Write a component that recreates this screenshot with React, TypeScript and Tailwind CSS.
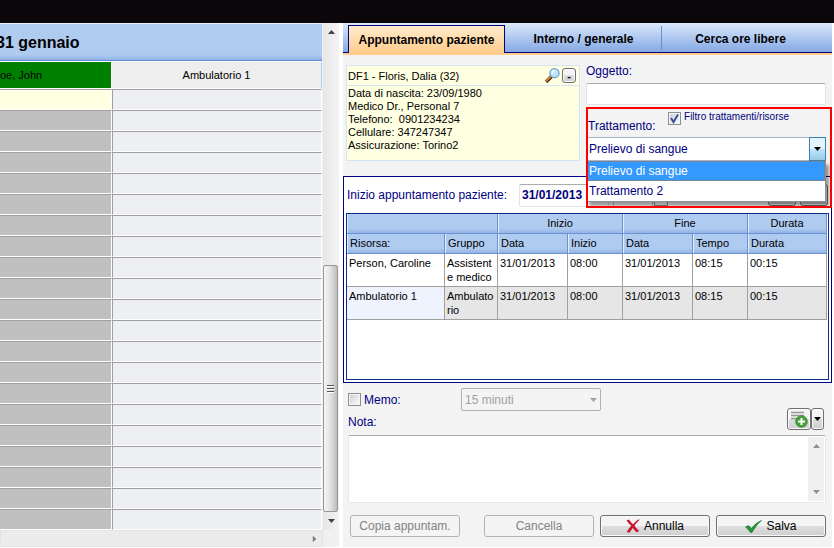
import { useState } from 'react';
import type { ReactNode } from 'react';
import clsx from 'clsx';

const slots = Array.from({ length: 21 }, (_, i) => i);

const tabs = ['Appuntamento paziente', 'Interno / generale', 'Cerca ore libere'];

const treatments = ['Prelievo di sangue', 'Trattamento 2'];

const resources = [
  { name: 'Person, Caroline', group: 'Assistente medico', date: '31/01/2013', from: '08:00', to: '08:15', duration: '00:15' },
  { name: 'Ambulatorio 1', group: 'Ambulatorio', date: '31/01/2013', from: '08:00', to: '08:15', duration: '00:15' },
];

const Arrow = ({ dir = 'down', className }: { dir?: 'up' | 'down' | 'right'; className?: string }) => (
  <svg viewBox="0 0 7 4" className={clsx('w-[7px] h-1 shrink-0', dir === 'up' && 'rotate-180', dir === 'right' && '-rotate-90', className)}>
    <path d="M0 0h7L3.500 4z" fill="currentColor" />
  </svg>
);

const Magnifier = () => (
  <svg viewBox="0 0 15 15" className="w-[15px] h-[15px]">
    <path d="M6.500 8.500 1 13.800" stroke="#3a2a20" strokeWidth="3.600" />
    <path d="M6 8.300 1 13" stroke="#e8892c" strokeWidth="1.800" />
    <circle cx="9.500" cy="5.200" r="4.500" fill="#bfe6fb" stroke="#6f9fd0" strokeWidth="1.300" />
    <path d="M7 5.500a3 3 0 0 1 3-3" stroke="#fff" strokeWidth="1.500" fill="none" />
  </svg>
);

const AddNote = () => (
  <svg viewBox="0 0 18 17" className="w-[18px] h-[17px]">
    <path d="M1 1.500h13M1 4.500h13M1 7.500h7" stroke="#999" strokeWidth="1.600" />
    <circle cx="11.500" cy="10.500" r="5.800" fill="#44a13c" stroke="#2e8530" strokeWidth="0.800" />
    <path d="M11.500 7v7M8 10.500h7" stroke="#fff" strokeWidth="2" />
  </svg>
);

const Cross = () => (
  <svg viewBox="0 0 14 14" className="w-[14px] h-[14px]">
    <path d="M.5 1.500 3 .5c1 1.500 2.500 3.500 4 4.800C8.500 3.500 10.500 1.500 13 .3l.5.700C11.500 2.500 9.500 4.800 8.500 6.700c1.300 1.900 2.800 3.500 4.500 5L11 13.500C9.500 12.500 8 10.500 6.800 9 5.500 10.500 4.300 12.300 3.500 13.800L.8 13C2 10.800 3.500 8.500 5.200 6.800 3.500 5.200 1.800 3.300.5 1.500z" fill="#c8142c" />
  </svg>
);

const Check = () => (
  <svg viewBox="0 0 17 13" className="w-[17px] h-[13px]">
    <path d="M.5 7 3.500 5.500 6.500 8.500C9 5 12.500 2 16.500.5 12.500 4 9.500 8 7 12.500H5.500C4 10.500 2.500 8.500.5 7z" fill="#1f9a35" stroke="#137225" strokeWidth="0.600" />
  </svg>
);

const Tick = ({ id, checked, onChange, className }: { id: string; checked: boolean; onChange: (v: boolean) => void; className?: string }) => (
  <span className={clsx('relative block w-[13px] h-[13px] shrink-0', className)}>
    <input
      id={id}
      type="checkbox"
      checked={checked}
      onChange={(e) => onChange(e.target.checked)}
      className="block w-[13px] h-[13px] appearance-none border border-[#8e8f8f] bg-linear-to-br from-[#c8ccd2] to-white shadow-[inset_0_0_0_1px_#f4f4f4]"
    />
    {checked && (
      <svg viewBox="0 0 13 13" className="absolute inset-0 pointer-events-none">
        <path d="M3 6l2.500 4L10 2.500" fill="none" stroke="#3d4f94" strokeWidth="2" />
      </svg>
    )}
  </span>
);

const btn = 'border border-[#707070] rounded-[3px] bg-linear-to-b from-[#f4f4f4] from-50% via-[#dedede] via-50% to-[#cfcfcf] text-black shadow-[inset_0_0_0_1px_#fafafa]';

const ActionButton = ({ icon, children, disabled }: { icon?: ReactNode; children: ReactNode; disabled?: boolean }) => (
  <button
    type="button"
    disabled={disabled}
    className={clsx(
      'w-[110px] h-[22px] flex items-center justify-center gap-1',
      disabled ? 'border border-[#adb2b5] rounded-[3px] bg-[#f4f4f4] text-[#838383]' : btn,
    )}
  >
    {icon}
    {children}
  </button>
);

const Agenda = () => (
  <section className="flex flex-col min-w-0 bg-[#f0f0f0] border-r-4 border-white">
    <div className="flex">
      <div className="flex-1 min-w-0 overflow-hidden bg-white">
        <h1 className="h-[38px] border-t border-b border-t-[#e8f0fc] border-b-[#5f8bd3] bg-linear-to-b from-[#b0cbf0] from-85% to-[#8fb2e6] text-base leading-[37px] font-bold">
          <span className="-ml-1">31 gennaio</span>
        </h1>
        <table className="w-full table-fixed border-separate border-spacing-0 text-[11px]">
          <colgroup>
            <col className="w-[112px]" />
            <col />
          </colgroup>
          <thead>
            <tr className="h-[28px]">
              <th className="p-0 border-t border-b border-r border-white bg-[#008000] text-left font-normal">oe, John</th>
              <th className="p-0 border-t border-b border-white border-r-[#b0cbf0] border-r bg-[#eee] text-center font-normal">Ambulatorio 1</th>
            </tr>
          </thead>
          <tbody>
            {slots.map((i) => (
              <tr key={i} className="h-[21px]">
                <td className={clsx('p-0 border-t border-t-[#a0a0a0] border-b border-r border-b-white border-r-white', i === 0 ? 'bg-[#ffffe1]' : 'bg-[#c0c0c0]')} />
                <td className="p-0 border-t border-l border-t-[#a0a0a0] border-l-[#a0a0a0] border-b border-r border-b-white border-r-white bg-[#eeeff2]" />
              </tr>
            ))}
          </tbody>
        </table>
      </div>
      <div className="ml-px w-4 flex flex-col items-stretch bg-linear-to-r from-[#e6e6e6] to-[#f4f4f4] text-[#404040]">
        <button type="button" aria-label="Su" className="h-[18px] flex items-center justify-center">
          <Arrow dir="up" />
        </button>
        <div className="flex-1 flex flex-col">
          <div className="flex-[225]" />
          <div className="flex-[246] mr-px border border-[#979797] rounded-[2px] bg-linear-to-r from-[#f5f5f5] via-[#e4e4e4] via-45% to-[#bdbdc0] flex flex-col items-center justify-center gap-px">
            <span className="w-[7px] h-[2px] border-b border-white bg-[#555]" />
            <span className="w-[7px] h-[2px] border-b border-white bg-[#555]" />
            <span className="w-[7px] h-[2px] border-b border-white bg-[#555]" />
          </div>
        </div>
        <button type="button" aria-label="Giù" className="h-[18px] flex items-center justify-center">
          <Arrow />
        </button>
      </div>
    </div>
    <div className="h-[17px] mr-4 flex items-center justify-end bg-[#ececec] border border-[#e3e3e3] pr-1 text-[#808080]">
      <Arrow dir="right" />
    </div>
  </section>
);

const PatientCard = () => (
  <div className="flex-[233] h-24 border border-[#d5e3f3] bg-[#ffffe1] text-[11px] text-black">
    <div className="h-5 px-px flex items-center border-b border-[#d5e3f3]">
      <span className="flex-1 leading-4">DF1 - Floris, Dalia (32)</span>
      <Magnifier />
      <button type="button" className={clsx('mx-[2px] w-[14px] h-[15px] font-bold leading-[12px]', btn)}>-</button>
    </div>
    <div className="px-px pt-px leading-[13px] whitespace-pre">
      <p>Data di nascita: 23/09/1980</p>
      <p>Medico Dr., Personal 7</p>
      <p>Telefono:{'  '}0901234234</p>
      <p>Cellulare: 347247347</p>
      <p>Assicurazione: Torino2</p>
    </div>
  </div>
);

const TreatmentPicker = () => {
  const [treatment, setTreatment] = useState(treatments[0]);
  const [filter, setFilter] = useState(true);

  return (
    <div className="relative z-10 pr-[6px]">
      <div className="h-[30px] px-[2px] pt-[5px] flex items-start">
        <label htmlFor="treatment" className="w-20 pt-[6px] leading-4">Trattamento:</label>
        <Tick id="filter" checked={filter} onChange={setFilter} />
        <label htmlFor="filter" className="ml-[3px] text-[10px] leading-[10px] whitespace-nowrap">Filtro trattamenti/risorse</label>
      </div>
      <div className="relative">
        <select
          id="treatment"
          value={treatment}
          onChange={(e) => setTreatment(e.target.value)}
          className="block w-full h-6 appearance-none border border-[#a8b4c4] bg-white px-[2px]"
        >
          {treatments.map((t) => (
            <option key={t}>{t}</option>
          ))}
        </select>
        <span className="absolute right-0 top-0 w-[17px] h-6 flex items-center justify-center border border-[#3c7fb1] bg-linear-to-b from-[#e3f4fc] from-50% via-[#bee6fd] via-50% to-[#98cbe6] text-black pointer-events-none">
          <Arrow />
        </span>
        <ul role="listbox" className="absolute inset-x-0 top-full border border-[#8a9099] border-t-0 bg-white shadow-[3px_4px_3px_rgba(0,0,0,0.4)] leading-5">
          {treatments.map((t) => (
            <li
              key={t}
              role="option"
              aria-selected={t === treatment}
              onClick={() => setTreatment(t)}
              className={clsx('h-5 px-[2px]', t === treatment && 'bg-[#3399ff] text-white outline-1 outline-dotted outline-[#b87030] -outline-offset-1')}
            >
              {t}
            </li>
          ))}
        </ul>
      </div>
      <div className="absolute inset-x-0 top-0 h-[101px] border-2 border-[#ff0000] pointer-events-none" />
    </div>
  );
};

const head = 'h-5 p-0 px-[3px] border-b border-r border-[#6a92d2] shadow-[inset_1px_0_0_#e4eefb] bg-linear-to-b from-[#b0cbf0] from-75% to-[#92b4e6] font-normal';
const cell = 'h-[33px] px-[2px] pt-[2px] pb-[2px] border-b border-r border-[#a0a0a0] align-top leading-[14px] break-all';

const ResourceTable = () => (
  <div className="m-[2px] mt-0 h-[167px] pr-px border border-[#0a2f8f] bg-white text-[11px] text-black">
    <table className="w-full table-fixed border-separate border-spacing-0">
      <colgroup>
        <col className="w-[98px]" />
        <col className="w-[53px]" />
        <col className="w-[70px]" />
        <col className="w-[55px]" />
        <col className="w-[70px]" />
        <col className="w-[55px]" />
        <col />
      </colgroup>
      <thead>
        <tr>
          <th colSpan={2} className={head} />
          <th colSpan={2} className={head}>Inizio</th>
          <th colSpan={2} className={head}>Fine</th>
          <th className={head}>Durata</th>
        </tr>
        <tr>
          {['Risorsa:', 'Gruppo', 'Data', 'Inizio', 'Data', 'Tempo', 'Durata'].map((h, i) => (
            <th key={i} className={clsx(head, 'text-left')}>{h}</th>
          ))}
        </tr>
      </thead>
      <tbody>
        {resources.map((r, i) => {
          const shade = i % 2 ? 'bg-[#e6e6e6]' : 'bg-white';
          return (
            <tr key={r.name}>
              <td className={clsx(cell, i % 2 ? 'bg-[#eef3fd]' : 'bg-white')}>{r.name}</td>
              <td className={clsx(cell, shade)}>{r.group}</td>
              <td className={clsx(cell, shade)}>{r.date}</td>
              <td className={clsx(cell, shade)}>{r.from}</td>
              <td className={clsx(cell, shade)}>{r.date}</td>
              <td className={clsx(cell, shade)}>{r.to}</td>
              <td className={clsx(cell, shade)}>{r.duration}</td>
            </tr>
          );
        })}
      </tbody>
    </table>
  </div>
);

const AppointmentPanel = () => {
  const [active, setActive] = useState(0);
  const [memo, setMemo] = useState(false);

  return (
    <section className="min-w-0 mr-[2px] bg-[#f3f3f3] text-xs text-[#000080]">
      <nav className="h-[30px] flex bg-linear-to-b from-[#dce9fc] to-[#82a6e2] text-black">
        <div className="w-[5px] border-b border-[#000080]" />
        {tabs.map((t, i) => (
          <button
            key={t}
            type="button"
            onClick={() => setActive(i)}
            className={clsx(
              'w-[157px] font-bold border-[#000080]',
              i === active ? 'mt-[2px] border border-b-0 bg-linear-to-b from-[#ffeccb] to-[#ffcc8c]' : 'border-b pt-[3px]',
              i === 1 && 'bg-[linear-gradient(#6a90d4,#6a90d4)] bg-[length:1px_24px] bg-no-repeat bg-position-[right_top_3px]',
            )}
          >
            {t}
          </button>
        ))}
        <div className="flex-1 border-b border-[#000080]" />
      </nav>
      <div className="h-[2px] bg-[#ffcc8c]" />

      <div className="pl-[3px] pt-[10px] flex gap-[6px]">
        <PatientCard />
        <div className="flex-[247] -mt-[3px]">
          <label htmlFor="subject" className="block h-[21px] leading-[18px]">Oggetto:</label>
          <div className="pr-[6px] pb-[2px]">
            <input id="subject" className="block w-full h-[22px] px-1 border border-[#e2e3ea] border-t-[#abadb3] rounded-[2px] bg-white" />
          </div>
          <TreatmentPicker />
        </div>
      </div>

      <div className="mt-[15px] border border-[#000080] bg-white">
        <div className="h-[36px] pl-[3px] pr-[3px] flex items-center">
          <label htmlFor="start" className="w-[172px]">Inizio appuntamento paziente:</label>
          <input id="start" defaultValue="31/01/2013" className="w-[90px] h-[23px] px-[2px] border border-[#e2e3ea] border-t-[#abadb3] rounded-[2px] bg-white font-bold" />
          <span className="ml-1 w-10 h-[23px] border border-[#c4c8cc] rounded-[2px]" />
          <span className="ml-px w-[14px] h-[22px] border border-[#8e8f8f]" />
          <span className="flex-1" />
          <span className={clsx('w-7 h-[22px]', btn)} />
          <span className={clsx('ml-1 w-7 h-[22px]', btn)} />
        </div>
        <ResourceTable />
      </div>

      <div className="pl-[5px] pr-[6px]">
        <div className="pt-[5px] flex items-center">
          <Tick id="memo" checked={memo} onChange={setMemo} />
          <label htmlFor="memo" className="ml-[3px] w-[97px]">Memo:</label>
          <div className="relative w-[140px] text-[#a0a0a0]">
            <select disabled aria-label="Memo" className="block w-full h-[23px] px-[3px] appearance-none border border-[#b0b0b0] rounded-[2px] bg-[#f4f4f4] opacity-100">
              <option>15 minuti</option>
            </select>
            <Arrow className="absolute right-1 top-[10px] pointer-events-none" />
          </div>
        </div>
        <div className="-mt-[3px] h-[27px] flex items-start">
          <label htmlFor="note" className="flex-1 pt-[6px]">Nota:</label>
          <button type="button" aria-label="Aggiungi nota" className={clsx('w-6 h-[22px] flex items-center justify-center', btn)}>
            <AddNote />
          </button>
          <button type="button" aria-label="Altre note" className={clsx('mr-[2px] w-[13px] h-[22px] flex items-center justify-center', btn)}>
            <Arrow />
          </button>
        </div>
        <div className="h-[68px] flex border border-[#e2e8f0] border-t-[#abadb3] rounded-[2px] bg-white">
          <textarea id="note" className="flex-1 p-1 resize-none outline-none" />
          <div className="m-px w-4 py-[7px] flex flex-col items-center justify-between bg-[#f0f0f0] text-[#909090]">
            <Arrow dir="up" />
            <Arrow />
          </div>
        </div>
        <div className="pt-3 pb-[9px] pl-[2px] flex gap-[6px]">
          <ActionButton disabled>Copia appuntam.</ActionButton>
          <span className="flex-1" />
          <ActionButton disabled>Cancella</ActionButton>
          <ActionButton icon={<Cross />}>Annulla</ActionButton>
          <ActionButton icon={<Check />}>Salva</ActionButton>
        </div>
      </div>
    </section>
  );
};

export default function App() {
  return (
    <main className="min-h-screen bg-white font-['Liberation_Sans',Arial,sans-serif] text-black">
      <header className="h-[23px] bg-[#0b060a]" />
      <div className="grid grid-cols-[343fr_491fr]">
        <Agenda />
        <AppointmentPanel />
      </div>
    </main>
  );
}
